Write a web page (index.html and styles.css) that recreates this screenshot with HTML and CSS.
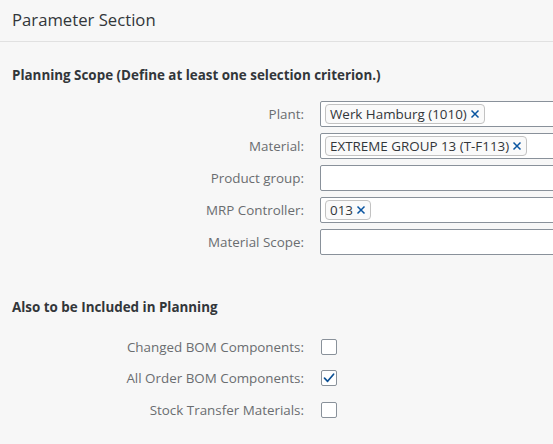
FILE: index.html
```html
<!DOCTYPE html>
<html>
<head>
<meta charset="utf-8">
<link rel="stylesheet" href="styles.css">
</head>
<body>
<div class="page">
  <header class="head">Parameter Section</header>
  <section class="group">
    <h2 class="group-title">Planning Scope (Define at least one selection criterion.)</h2>
    <div class="form">
      <label class="lbl">Plant:</label>
      <div class="input"><span class="token">Werk Hamburg (1010)<svg class="x" viewBox="0 0 10 10" width="10" height="10"><path d="M1.5 1.5 L8.5 8.5 M8.5 1.5 L1.5 8.5" stroke="#0854a0" stroke-width="1.5" fill="none"/></svg></span></div>
      <label class="lbl">Material:</label>
      <div class="input"><span class="token">EXTREME GROUP 13 (T-F113)<svg class="x" viewBox="0 0 10 10" width="10" height="10"><path d="M1.5 1.5 L8.5 8.5 M8.5 1.5 L1.5 8.5" stroke="#0854a0" stroke-width="1.5" fill="none"/></svg></span></div>
      <label class="lbl">Product group:</label>
      <div class="input"></div>
      <label class="lbl">MRP Controller:</label>
      <div class="input"><span class="token">013<svg class="x" viewBox="0 0 10 10" width="10" height="10"><path d="M1.5 1.5 L8.5 8.5 M8.5 1.5 L1.5 8.5" stroke="#0854a0" stroke-width="1.5" fill="none"/></svg></span></div>
      <label class="lbl">Material Scope:</label>
      <div class="input"></div>
    </div>
  </section>
  <section class="group group2">
    <h2 class="group-title">Also to be Included in Planning</h2>
    <div class="form checks">
      <label class="lbl">Changed BOM Components:</label>
      <div class="cell"><span class="cb"></span></div>
      <label class="lbl">All Order BOM Components:</label>
      <div class="cell"><span class="cb"><svg viewBox="0 0 16 16" width="16" height="16"><path d="M3.5 8.2 L6.6 11.3 L12.6 4.2" fill="none" stroke="#0a4f94" stroke-width="1.7" stroke-linecap="round" stroke-linejoin="round"/></svg></span></div>
      <label class="lbl">Stock Transfer Materials:</label>
      <div class="cell"><span class="cb"></span></div>
    </div>
  </section>
</div>
</body>
</html>
```

FILE: styles.css
```css
html, body {
  margin: 0;
  padding: 0;
  background: #f7f7f7;
  overflow: hidden;
}
body {
  font-family: "Open Sans", "Liberation Sans", sans-serif;
  color: #32363a;
}
.page {
  width: 553px;
  height: 444px;
  overflow: hidden;
}
.head {
  height: 42px;
  box-sizing: border-box;
  border-bottom: 1px solid #e1e1e1;
  padding-left: 12px;
  font-size: 16.7px;
  line-height: 40px;
  color: #32363a;
}
.group {
  padding: 0 12px;
}
.group-title {
  margin: 0;
  padding-top: 24px;
  font-size: 13.4px;
  font-weight: 700;
  line-height: 18px;
  color: #32363a;
}
.form {
  display: grid;
  grid-template-columns: 292px 260px;
  column-gap: 16px;
  row-gap: 6px;
  margin-top: 17px;
  align-items: center;
}
.lbl {
  text-align: right;
  font-size: 13.4px;
  color: #6a6d70;
}
.input {
  height: 26px;
  box-sizing: border-box;
  background: #fff;
  border: 1px solid #89919a;
  border-radius: 2px;
  display: flex;
  align-items: center;
  padding-left: 4px;
}
.token {
  display: inline-flex;
  align-items: center;
  height: 20px;
  box-sizing: border-box;
  border: 1px solid #c2c2c2;
  border-radius: 4px;
  background: #fafafa;
  padding: 0 4px 0 4px;
  font-size: 13.4px;
  color: #32363a;
}
.x {
  margin-left: 3px;
  display: block;
}
.group2 {
  margin-top: 27px;
}
.group2 .group-title {
  padding-top: 16px;
}
.checks {
  row-gap: 0;
  margin-top: 15px;
}
.checks .cell {
  height: 31.5px;
  display: flex;
  align-items: center;
  padding-left: 1px;
}
.cb {
  width: 16px;
  height: 16px;
  box-sizing: border-box;
  border: 1px solid #89919a;
  border-radius: 2px;
  background: #fff;
  position: relative;
  display: block;
}
.cb svg {
  position: absolute;
  left: -1px;
  top: -1px;
}
```
